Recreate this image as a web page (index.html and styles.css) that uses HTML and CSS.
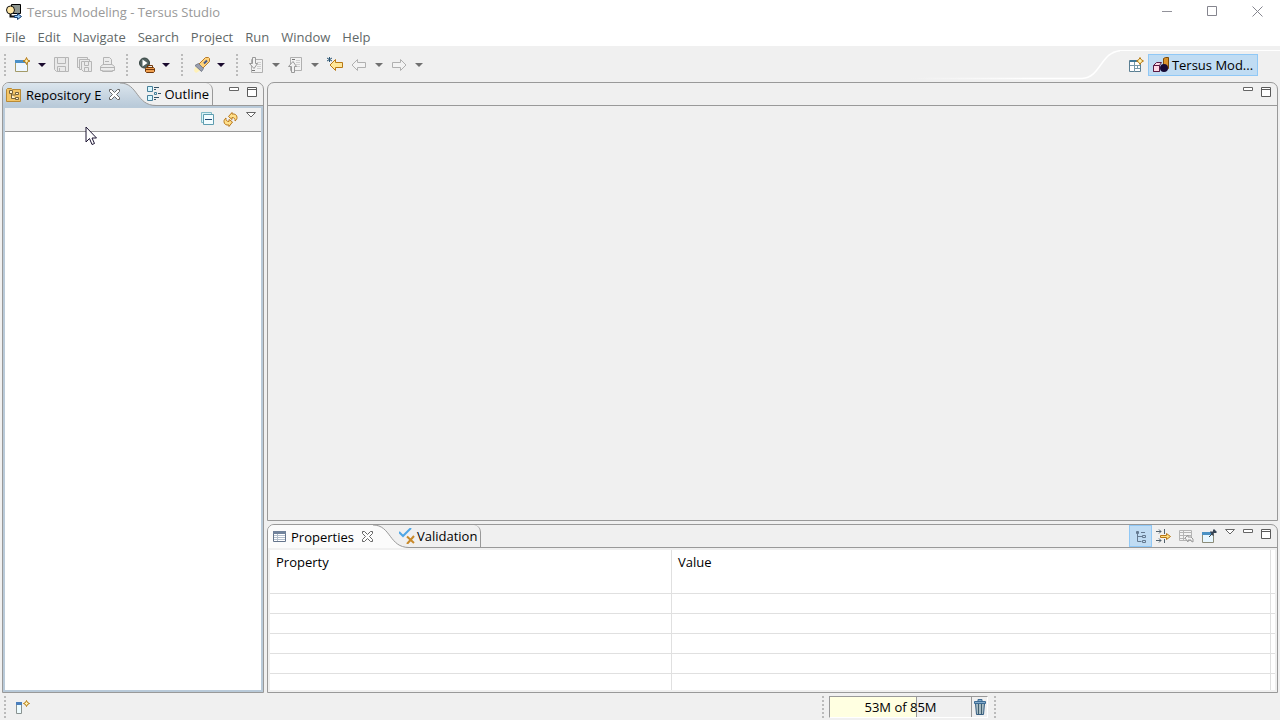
FILE: index.html
```html
<!DOCTYPE html>
<html lang="en">
<head>
    <meta charset="UTF-8">
    <meta name="viewport" content="width=device-width, initial-scale=1.0">
    <title>Tersus Modeling - Tersus Studio</title>
    <link rel="stylesheet" href="styles.css">
</head>
<body>
    <!-- Shared icons -->
    <svg class="sprite" aria-hidden="true">
        <symbol id="i-down" viewBox="0 0 8 4"><path d="M0 0h8L4 4z" fill="currentColor"/></symbol>
        <symbol id="i-min" viewBox="0 0 11 11"><path d="M.5 1.5h9v3h-9z" fill="#fff" stroke="#666"/></symbol>
        <symbol id="i-max" viewBox="0 0 11 11"><path d="M.5 1.5h9v9h-9zM.5 3.5h9" fill="#fff" stroke="#5a5a5a"/></symbol>
        <symbol id="i-menu" viewBox="0 0 11 11"><path d="M.5 1.5h9L5 6z" fill="#fff" stroke="#666"/></symbol>
        <symbol id="i-close" viewBox="0 0 11 11"><path d="M.5.5h2l3 3 3-3h2v2l-3 3 3 3v2h-2l-3-3-3 3h-2v-2l3-3-3-3z" fill="#fff" stroke="#666"/></symbol>
    </svg>

    <header class="titlebar">
        <svg class="app-icon" width="16" height="16" viewBox="0 0 16 16">
            <path d="M5.500.5h9v9h-9z" fill="#8d948e" stroke="#000"/>
            <circle cx="4.500" cy="6" r="4" fill="#ffe7a6" stroke="#111"/>
            <path d="M4.500 10v2.500H9" fill="none" stroke="#111" stroke-width="2"/>
            <path d="M8.500 11.500h3v-2l4 3-4 3v-2h-3z" fill="#8bc2ef" stroke="#173d6e"/>
        </svg>
        <h1>Tersus Modeling - Tersus Studio</h1>
        <div class="window-buttons">
            <button type="button" aria-label="Minimize window"><svg width="11" height="11"><path d="M0 5.500h10" stroke="#92929a"/></svg></button>
            <button type="button" aria-label="Maximize window"><svg width="11" height="11"><path d="M.5.5h9v9h-9z" fill="none" stroke="#85858e"/></svg></button>
            <button type="button" aria-label="Close window"><svg width="11" height="11"><path d="M.5.5l10 10M10.500.5l-10 10" stroke="#85858e"/></svg></button>
        </div>
    </header>

    <nav class="menubar">
        <button type="button">File</button>
        <button type="button">Edit</button>
        <button type="button">Navigate</button>
        <button type="button">Search</button>
        <button type="button">Project</button>
        <button type="button">Run</button>
        <button type="button">Window</button>
        <button type="button">Help</button>
    </nav>

    <div class="toolbar">
        <span class="grip"></span>
        <button type="button" class="tool" aria-label="New">
            <svg width="16" height="16" viewBox="0 0 16 16">
                <path d="M.5 3.500h12v11H.5z" fill="#eef7ff" stroke="#a39a68"/>
                <path d="M0 3h11v3H0z" fill="#4a90c8"/>
                <path d="M11.500.5l1 2.500 2.500 1-2.500 1-1 2.500-1-2.500L8 4l2.500-1z" fill="#fff3b0" stroke="#b87a12"/>
            </svg>
        </button>
        <button type="button" class="drop" aria-label="New options"><svg width="8" height="4"><use href="#i-down"/></svg></button>
        <button type="button" class="tool" aria-label="Save">
            <svg width="16" height="16" viewBox="0 0 16 16" fill="#e9e9e9" stroke="#b6b6b6">
                <path d="M.5.5h14v14h-12l-2-2z"/><path d="M3.500.5h8v6h-8zM3.500 9.500h8v5h-8zM5.500 11v3"/>
            </svg>
        </button>
        <button type="button" class="tool" aria-label="Save all">
            <svg width="16" height="16" viewBox="0 0 16 16" fill="#ebebeb" stroke="#b6b6b6">
                <path d="M.5.5h10v10H.5z"/><path d="M2.500 2.500h10v10h-10z"/><path d="M4.500 4.500h10v10h-8l-2-2z"/><path d="M7.500 4.500h4v4h-4zM7.500 10.500h4v4h-4z"/>
            </svg>
        </button>
        <button type="button" class="tool" aria-label="Print">
            <svg width="16" height="16" viewBox="0 0 16 16" fill="#ececec" stroke="#b4b4b4">
                <path d="M3.500 7.500v-7h6l2 2v5"/><path d="M3 7.500h9l2.500 2v4H.5v-4z"/><path d="M1 10.500h13M2.500 13.500v1h10v-1M5 4.500h4"/>
            </svg>
        </button>
        <span class="grip"></span>
        <button type="button" class="tool" aria-label="Run">
            <svg width="16" height="16" viewBox="0 0 16 16">
                <circle cx="5.500" cy="6" r="5" fill="#516160" stroke="#344340"/>
                <path d="M3.500 2.500v7l5-3.500z" fill="#fff"/>
                <path d="M6.500 11.500l1-1h7l1 1v3l-1 1h-7l-1-1z" fill="#f0a050" stroke="#70380c"/>
                <path d="M8.500 10V8.500h5V10M6 12.500h10" fill="none" stroke="#70380c"/>
            </svg>
        </button>
        <button type="button" class="drop" aria-label="Run options"><svg width="8" height="4"><use href="#i-down"/></svg></button>
        <span class="grip"></span>
        <button type="button" class="tool" aria-label="Search">
            <svg width="16" height="16" viewBox="0 0 16 16">
                <path d="M1 10l-1 4 2 2 5-3z" fill="#fff1b8"/>
                <path d="M5 7l6.500-6.500h3l1 1v3L9 11z" fill="#ffd27a" stroke="#b87a28"/>
                <path d="M4.500 6.500l5 5-2 3-6.500-6z" fill="#9a9fae" stroke="#777d8c"/>
                <path d="M10 6.500l3-3" stroke="#465a8c" stroke-width="2"/>
            </svg>
        </button>
        <button type="button" class="drop" aria-label="Search options"><svg width="8" height="4"><use href="#i-down"/></svg></button>
        <span class="grip"></span>
        <button type="button" class="tool" aria-label="Next annotation">
            <svg width="16" height="16" viewBox="0 0 16 16" fill="#f2f2f2" stroke="#b0b0b0">
                <path d="M2.500 2.500h11v13h-11z"/><path d="M8 5.500h4M8 7.500h4M8 9.500h4M8 11.500h4" stroke="#cfcfcf"/><path d="M3 13.500h3" stroke="#777"/>
                <path d="M3.500.5h3v6h2L5 11.500.5 6.500h3z" stroke="#999"/>
            </svg>
        </button>
        <button type="button" class="drop off" aria-label="Next annotation options"><svg width="8" height="4"><use href="#i-down"/></svg></button>
        <button type="button" class="tool" aria-label="Previous annotation">
            <svg width="16" height="16" viewBox="0 0 16 16" fill="#f2f2f2" stroke="#b0b0b0">
                <path d="M2.500.5h11v13h-11z"/><path d="M8 3.500h4M8 5.500h4M8 7.500h4M8 9.500h4" stroke="#cfcfcf"/><path d="M4 2.500h3" stroke="#777"/>
                <path d="M3.500 15.500h3v-6h2L5 4.500.5 9.500h3z" stroke="#999"/>
            </svg>
        </button>
        <button type="button" class="drop off" aria-label="Previous annotation options"><svg width="8" height="4"><use href="#i-down"/></svg></button>
        <button type="button" class="tool wide" aria-label="Last edit location">
            <svg width="16" height="16" viewBox="0 0 16 16">
                <path d="M3 8l5.500-5.500v3h7v5h-7v3z" fill="#ffe89a" stroke="#b87816"/>
                <path d="M2.500 0v5M0 1l5 3M5 1L0 4" stroke="#2c5674"/>
            </svg>
        </button>
        <button type="button" class="tool wide" aria-label="Back">
            <svg width="16" height="16" viewBox="0 0 16 16"><path d="M1 8l5.500-5.500v3h8v5h-8v3z" fill="#f3f3f3" stroke="#b0b0b0"/></svg>
        </button>
        <button type="button" class="drop off" aria-label="Back history"><svg width="8" height="4"><use href="#i-down"/></svg></button>
        <button type="button" class="tool wide" aria-label="Forward">
            <svg width="16" height="16" viewBox="0 0 16 16"><path d="M15 8L9.500 2.500v3h-8v5h8v3z" fill="#f3f3f3" stroke="#b0b0b0"/></svg>
        </button>
        <button type="button" class="drop off" aria-label="Forward history"><svg width="8" height="4"><use href="#i-down"/></svg></button>

        <div class="perspectives">
            <svg class="swoosh" width="210" height="30" viewBox="0 0 210 30">
                <defs><linearGradient id="fade" gradientUnits="userSpaceOnUse" x1="0" y1="0" x2="120" y2="0"><stop offset="0" stop-color="#f0f0f0"/><stop offset="1" stop-color="#fff"/></linearGradient></defs>
                <path d="M0 28.500h172C192 27 190 1 212 .5" fill="none" stroke="url(#fade)" stroke-width="1.500"/>
            </svg>
            <div class="perspective-bar">
                <button type="button" class="tool" aria-label="Open perspective">
                    <svg width="16" height="16" viewBox="0 0 16 16">
                        <path d="M1.500 3.500h11v11h-11z" fill="#fff" stroke="#5b7f93"/><path d="M2 3h8v2H2z" fill="#3f7898"/>
                        <path d="M6.500 5v10M2 8.500h10M9.500 9v3M7 11.500h5" stroke="#7899a8" fill="none"/>
                        <path d="M12 .5l1 2 2.500 1.500L13 5.500l-1 2-1-2L8.500 4 11 2.500z" fill="#fff3b0" stroke="#b87a12"/>
                    </svg>
                </button>
                <button type="button" class="perspective">
                    <svg width="16" height="16" viewBox="0 0 16 16">
                        <path d="M10.500 1.500l2-1h3v11l-2 1h-3z" fill="#d9912b" stroke="#7c4a08"/>
                        <path d="M.5 8.500l3-3h5l-2 3v6h-6z" fill="#ffd8e4" stroke="#5a1c44"/><path d="M.5 8.500h6v6h-6z" fill="#ffd8e4" stroke="#5a1c44"/>
                        <circle cx="11" cy="11" r="4" fill="#170a35"/>
                    </svg>
                    Tersus Mod...
                </button>
            </div>
        </div>
    </div>

    <main class="workbench">
        <section class="pane explorer">
            <div class="tabs">
                <button type="button" class="tab active">
                    <svg width="16" height="16" viewBox="0 0 16 16">
                        <path d="M.5 2.500l1-1h4l1 1h8v12H.5z" fill="#f3c567" stroke="#b98a35"/>
                        <path d="M3.500 3.500h3v3h-3zM9.500 5.500h3v2h-3zM9.500 10.500h3v2h-3zM5.500 7v4.500h4M5.500 8h4" fill="#fff3cf" stroke="#75623d"/>
                    </svg>
                    Repository E
                </button>
                <button type="button" class="tab-close" aria-label="Close Repository Explorer"><svg width="11" height="11"><use href="#i-close"/></svg></button>
                <svg class="curve" width="36" height="23" viewBox="0 0 36 23">
                    <defs><linearGradient id="blue" x1="0" y1="0" x2="0" y2="1"><stop offset="0" stop-color="#dbe5ed"/><stop offset="1" stop-color="#b9cad9"/></linearGradient></defs>
                    <path d="M0 0C18 0 16 22.500 36 22.500V23H0z" fill="url(#blue)"/>
                    <path d="M0 0C18 0 16 22.500 36 22.500" fill="none" stroke="#999"/>
                </svg>
                <button type="button" class="tab next">
                    <svg width="16" height="16" viewBox="0 0 16 16" fill="#d8f7ff" stroke="#477f99">
                        <path d="M1.500.5h5v5h-5zM1.500 9.500h5v5h-5zM8.500 6.500h2v2h-2z"/><path d="M8 1.500h5M8 3.500h2M12 7.500h3M8 11.500h5M8 13.500h2" stroke="#345268"/>
                    </svg>
                    Outline
                </button>
                <div class="pane-tools">
                    <button type="button" aria-label="Minimize"><svg width="11" height="11"><use href="#i-min"/></svg></button>
                    <button type="button" aria-label="Maximize"><svg width="11" height="11"><use href="#i-max"/></svg></button>
                </div>
            </div>
            <div class="view-toolbar">
                <button type="button" class="tool" aria-label="Collapse all">
                    <svg width="16" height="16" viewBox="0 0 16 16">
                        <path d="M1.500 1.500h10v10h-10z" fill="#d9f3f8" stroke="#80b9c6"/><path d="M3.500 3.500h10v10h-10z" fill="#f2fcff" stroke="#5d9caf"/><path d="M5 8.500h7" stroke="#234a75"/>
                    </svg>
                </button>
                <button type="button" class="tool" aria-label="Refresh">
                    <svg width="16" height="16" viewBox="0 0 16 16" fill="#ffe08a" stroke="#b8771a">
                        <path d="M5.500 5.500L9 1.500V3c3-.5 5 1 5 3.500 0 1.500-.5 2.500-2 3.500.5-2-.5-3.500-3-3.500v2z"/>
                        <path d="M9.500 11L6 15.500V14c-3 .5-5-1-5-3.500C1 9 1.500 8 3 7c-.5 2 .5 3.500 3 3.500V8.500z"/>
                    </svg>
                </button>
                <button type="button" class="view-menu" aria-label="View menu"><svg width="11" height="11"><use href="#i-menu"/></svg></button>
            </div>
            <div class="tree"></div>
        </section>

        <div class="column">
            <section class="pane editor">
                <div class="tabs">
                    <div class="pane-tools">
                        <button type="button" aria-label="Minimize"><svg width="11" height="11"><use href="#i-min"/></svg></button>
                        <button type="button" aria-label="Maximize"><svg width="11" height="11"><use href="#i-max"/></svg></button>
                    </div>
                </div>
            </section>

            <section class="pane properties">
                <div class="tabs">
                    <button type="button" class="tab active">
                        <svg width="16" height="16" viewBox="0 0 16 16">
                            <path d="M2.500 2.500h12v10h-12z" fill="#fff" stroke="#65758c"/><path d="M2 2h13v3H2z" fill="#71839c"/>
                            <path d="M3 6.500h11M3 8.500h11M3 10.500h11M6.500 5v7" stroke="#b3bfcd"/>
                        </svg>
                        Properties
                    </button>
                    <button type="button" class="tab-close" aria-label="Close Properties"><svg width="11" height="11"><use href="#i-close"/></svg></button>
                    <svg class="curve" width="36" height="23" viewBox="0 0 36 23">
                        <path d="M0 0C18 0 16 22.500 36 22.500V23H0z" fill="#fbfbfb"/>
                        <path d="M0 0C18 0 16 22.500 36 22.500" fill="none" stroke="#999"/>
                    </svg>
                    <button type="button" class="tab next">
                        <svg width="16" height="16" viewBox="0 0 16 16" fill="none">
                            <path d="M0 4l4 4 8-8" stroke="#4ea6e6" stroke-width="2"/><path d="M8 8.500l7 6.500M15 8l-7 8" stroke="#c98a2a" stroke-width="2"/>
                        </svg>
                        Validation
                    </button>
                    <div class="pane-tools">
                        <button type="button" class="view-tool on" aria-label="Show categories">
                            <svg width="16" height="16" viewBox="0 0 16 16" fill="none" stroke="#64798f"><path d="M4.500 4v9.500h4M5 8.500h4M3.500 3.500h2v2h-2zM9.500 7.500h3v2h-3zM9.500 12.500h3v2h-3zM8 4.500h4"/></svg>
                        </button>
                        <button type="button" class="view-tool" aria-label="Show advanced properties">
                            <svg width="16" height="16" viewBox="0 0 16 16" fill="none" stroke="#52616c"><path d="M0 3.500h5M3 1.500l2 2-2 2M8.500 1v5M0 12.500h5M3 10.500l2 2-2 2M8.500 11v4"/><path d="M4.500 7.500h6v-2l4 3-4 3v-2h-6z" fill="#ffdf7e" stroke="#b8771a"/></svg>
                        </button>
                        <button type="button" class="view-tool" aria-label="Restore default value">
                            <svg width="16" height="16" viewBox="0 0 16 16" fill="#f3f3f3" stroke="#b4b4b4"><path d="M.5 2.500h12v10H.5zM1 4.500h11M1 7.500h11M1 10.500h11M4.500 3v9"/><path d="M6 10l3-3v2h3l2 2v3l-2-1v-1H9v2z" stroke="#999"/></svg>
                        </button>
                        <button type="button" class="view-tool" aria-label="Pin to selection">
                            <svg width="16" height="16" viewBox="0 0 16 16"><path d="M.5 4.500h11v10H.5z" fill="#e8f7ff" stroke="#8c8c78"/><path d="M0 4h10v3H0z" fill="#4a91c4"/><path d="M7 9l3-3" stroke="#444"/><path d="M8 4l1-1 1 1 1-1V2l1-1 3 3-1 1h-2l-1 1 1 1-1 1z" fill="#344354"/></svg>
                        </button>
                        <button type="button" aria-label="View menu"><svg width="11" height="11"><use href="#i-menu"/></svg></button>
                        <button type="button" aria-label="Minimize"><svg width="11" height="11"><use href="#i-min"/></svg></button>
                        <button type="button" aria-label="Maximize"><svg width="11" height="11"><use href="#i-max"/></svg></button>
                    </div>
                </div>
                <div class="sheet">
                    <table>
                        <colgroup><col class="col-name"><col><col class="col-end"></colgroup>
                        <thead><tr><th>Property</th><th>Value</th><td></td></tr></thead>
                        <tbody>
                            <tr><td></td><td></td><td></td></tr>
                            <tr><td></td><td></td><td></td></tr>
                            <tr><td></td><td></td><td></td></tr>
                            <tr><td></td><td></td><td></td></tr>
                            <tr><td></td><td></td><td></td></tr>
                            <tr><td></td><td></td><td></td></tr>
                        </tbody>
                    </table>
                </div>
            </section>
        </div>
    </main>

    <footer class="statusbar">
        <span class="grip"></span>
        <button type="button" class="tool" aria-label="Show view as a fast view">
            <svg width="16" height="16" viewBox="0 0 16 16">
                <path d="M1.500 3.500h5v11h-5z" fill="#eefcff" stroke="#8a9290"/><path d="M1 3h6v3H1z" fill="#4a7fbd"/>
                <path d="M11.500 1.500l1 2 2 1-2 1-1 2-1-2-2-1 2-1z" fill="#fff3b0" stroke="#b87a12"/>
            </svg>
        </button>
        <div class="heap-area">
            <span class="grip"></span>
            <div class="heap">
                <div class="heap-bar"><span class="heap-used" style="width: 62%"></span><span class="heap-text">53M of 85M</span></div>
                <button type="button" aria-label="Run garbage collector">
                    <svg width="12" height="16" viewBox="0 0 12 16">
                        <path d="M1.500 4.500h9l-1 11h-7z" fill="#a9bcc3" stroke="#365f83"/><path d="M4.500 5v10M7.500 5v10" stroke="#405e70"/><path d="M.5 2.500h11v2H.5zM4 2V.5h4V2" fill="#83aac8" stroke="#3b6b95"/>
                    </svg>
                </button>
            </div>
            <span class="grip"></span>
        </div>
    </footer>

    <!-- Mouse pointer -->
    <svg class="pointer" width="13" height="20" viewBox="0 0 13 20"><path d="M1 1v15l3.500-3.500L7 18.500l2.500-1L7 12h4.500z" fill="#fff" stroke="#1c1433"/></svg>
</body>
</html>
```
FILE: styles.css
```css
* {
    box-sizing: border-box;
}
body {
    margin: 0;
    height: 100vh;
    display: flex;
    flex-direction: column;
    background-color: #f0f0f0;
    color: #000;
    font-family: "Open Sans", "Noto Sans", sans-serif;
    font-size: 13px;
    line-height: 20px;
}
button {
    display: flex;
    align-items: center;
    justify-content: center;
    margin: 0;
    padding: 0;
    border: none;
    background: none;
    color: inherit;
    font: inherit;
    white-space: nowrap;
}
svg {
    display: block;
    flex-shrink: 0;
}
.sprite {
    position: absolute;
    width: 0;
    height: 0;
}
/* Title and menu */
.titlebar {
    display: flex;
    flex-shrink: 0;
    align-items: center;
    height: 25px;
    padding: 0 0 2px 6px;
    background-color: #fff;
}
.titlebar h1 {
    margin: 0 0 0 5px;
    font-size: 13px;
    font-weight: normal;
    color: #999;
}
.window-buttons {
    display: flex;
    margin-left: auto;
}
.window-buttons button {
    width: 45px;
    height: 23px;
}
.menubar {
    display: flex;
    flex-shrink: 0;
    gap: 12px;
    height: 21px;
    padding: 2px 5px 0;
    background-color: #fff;
    color: #5f6868;
}
.menubar button {
    height: 20px;
}
/* Main toolbar */
.toolbar {
    display: flex;
    flex-shrink: 0;
    align-items: center;
    height: 36px;
    padding-top: 2px;
}
.grip {
    flex-shrink: 0;
    width: 16px;
    height: 22px;
    background: repeating-linear-gradient(#bbb 0, #bbb 2px, transparent 2px, transparent 4px) center / 2px 100% no-repeat;
}
.toolbar > .grip:first-child,
.statusbar > .grip {
    width: 11px;
    background-position-x: 4px;
}
.tool {
    width: 23px;
    height: 22px;
}
.tool.wide {
    width: 24px;
}
.drop {
    width: 16px;
    height: 22px;
    color: #1a0a2e;
}
.drop.off {
    color: #707070;
}
.perspectives {
    display: flex;
    align-items: flex-start;
    margin-left: auto;
    height: 30px;
}
.perspective-bar {
    display: flex;
    gap: 1px;
    padding: 3px 22px 0 4px;
    border-top: 1px solid #fff;
}
.perspective {
    gap: 3px;
    width: 110px;
    height: 22px;
    border: 1px solid #90c8f6;
    background-color: #c0dcf3;
}
/* Workbench panes */
.workbench {
    flex: 1;
    min-height: 0;
    display: grid;
    grid-template-columns: 262px minmax(0, 1fr);
    grid-template-rows: minmax(0, 1fr);
    gap: 3px;
    padding: 0 2px;
}
.column {
    display: grid;
    grid-template-rows: minmax(0, 13fr) minmax(0, 5fr);
    gap: 3px;
}
.pane {
    display: flex;
    flex-direction: column;
    min-width: 0;
    border: 1px solid #999;
    border-radius: 7px 7px 0 0;
    overflow: hidden;
}
.tabs {
    display: flex;
    flex-shrink: 0;
    height: 23px;
    border-bottom: 1px solid #999;
}
.tab {
    height: 22px;
    gap: 4px;
    padding: 0 3px;
}
.tab.active {
    height: 23px;
    padding-right: 0;
}
.tab-close {
    height: 23px;
    padding: 0 0 0 8px;
}
.tab.next {
    gap: 2px;
    margin-left: -13px;
    border-right: 1px solid #999;
    border-radius: 0 7px 0 0;
}
.explorer .tab.active,
.explorer .tab-close {
    background: linear-gradient(#dbe5ed, #b9cad9);
}
.properties .tab.active,
.properties .tab-close {
    background-color: #fbfbfb;
}
.pane-tools {
    display: flex;
    margin-left: auto;
    padding-right: 2px;
}
.pane-tools button {
    align-items: flex-start;
    width: 18px;
    padding-top: 3px;
}
.pane-tools .view-tool {
    align-items: center;
    width: 23px;
    height: 22px;
    padding-top: 0;
}
.pane-tools .view-tool.on {
    border: 1px solid #90c8f6;
    background-color: #c0dcf3;
}
.view-toolbar {
    display: flex;
    flex-shrink: 0;
    justify-content: flex-end;
    height: 26px;
    border: solid #b9cad9;
    border-width: 2px 2px 0;
    box-shadow: inset 0 -1px #999;
}
.view-menu {
    align-items: flex-start;
    width: 19px;
    padding-top: 3px;
}
.tree {
    flex: 1;
    border: solid #b9cad9;
    border-width: 0 2px 2px;
    background-color: #fff;
}
/* Property sheet */
.sheet {
    flex: 1;
    min-height: 0;
    margin: 2px;
    background-color: #fff;
    overflow: hidden;
}
.sheet table {
    width: 100%;
    table-layout: fixed;
    border-collapse: separate;
    border-spacing: 0;
}
.col-name {
    width: 40%;
}
.col-end {
    width: 4px;
}
.sheet th,
.sheet td {
    height: 20px;
    padding: 0 6px;
    border-right: 1px solid #e0e0e0;
    border-bottom: 1px solid #e0e0e0;
    text-align: left;
    font-weight: normal;
}
.sheet thead th,
.sheet thead td {
    height: 24px;
    border-bottom: none;
}
.sheet td:last-child {
    padding: 0;
    border-right: none;
}
/* Status bar */
.statusbar {
    display: flex;
    flex-shrink: 0;
    align-items: center;
    height: 27px;
}
.heap-area {
    display: flex;
    align-items: center;
    margin-left: auto;
    padding-right: 279px;
}
.heap-area .grip {
    width: 13px;
}
.heap {
    display: flex;
    width: 159px;
    height: 22px;
    border: 1px solid #999;
    border-right-color: #fff;
    border-bottom-color: #fff;
}
.heap-bar {
    position: relative;
    flex: 1;
    text-align: center;
}
.heap-used {
    position: absolute;
    top: 0;
    bottom: 0;
    left: 0;
    border-right: 1px solid #999;
    background-color: #ffffe1;
}
.heap-text {
    position: relative;
}
.heap button {
    width: 16px;
    border-left: 1px solid #999;
}
.pointer {
    position: absolute;
    left: 85px;
    top: 126px;
    pointer-events: none;
}
```
